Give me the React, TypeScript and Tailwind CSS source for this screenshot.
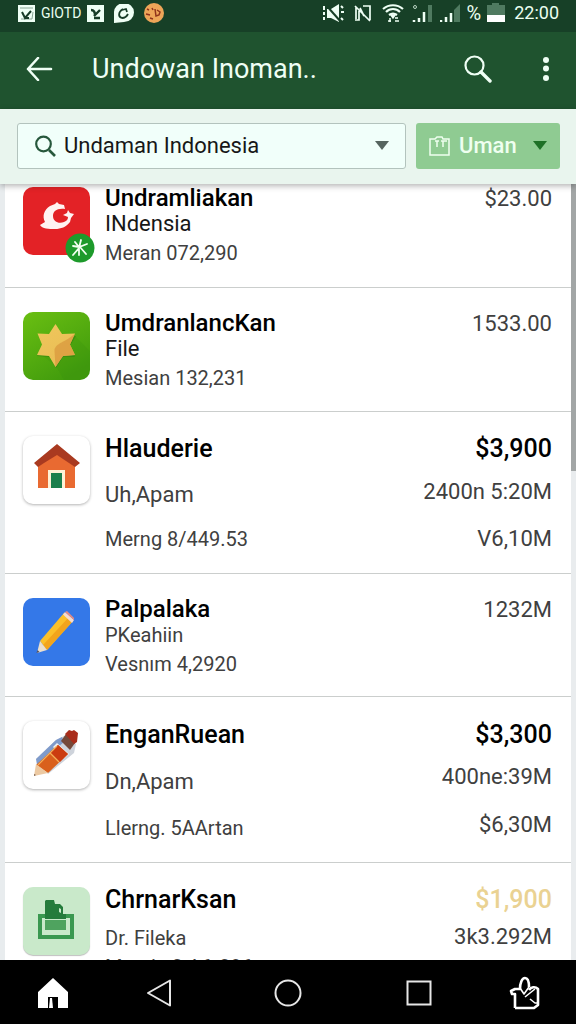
import type { ReactNode } from "react";

type Line = { text: string; className: string };
type Entry = {
  id: string;
  rowClass: string;
  icon: ReactNode;
  left: Line[];
  right: Line[];
};

const TITLE_SMALL = "text-[24px] font-medium text-black";
const TITLE = "text-[25px] font-medium text-black";
const SUB = "text-[22px] text-neutral-900";
const BODY = "text-[22px] text-neutral-700";
const META = "text-[20px] text-neutral-700";

const tile = "h-[68px] w-[67px] shrink-0 rounded-[10px]";

function CrescentIcon() {
  return (
    <div className="relative h-[68px] w-[67px] shrink-0">
      <svg viewBox="0 0 67 68" className="h-full w-full rounded-[10px] bg-[#e32226]" aria-hidden="true">
        <path
          d="M27 19l5-2 2-2 2 2 5 1 1 4c-8-1-12 2-12 7 0 6 6 8 11 6 3-1 4-3 4-5l-5-2 4-2 1-3 2 3 4 1-3 4-1 4c-4 5-9 7-15 7-6 0-13 0-15-4l5-3c-3-6-1-12 5-16z"
          fill="#fff3f2"
        />
      </svg>
      <svg viewBox="0 0 30 30" className="absolute top-[46px] left-[42px] h-[30px] w-[30px]" aria-hidden="true">
        <circle cx="15" cy="15" r="14.500" fill="#1d9a2b" />
        <path
          d="M8 13l6 1 8-3M16 7l-2 8-6 7M10 9l4 5M14 16v6M15 14l6 7"
          stroke="#f2fff2"
          strokeWidth="1.800"
          fill="none"
          strokeLinecap="round"
        />
      </svg>
    </div>
  );
}

function StarIcon() {
  return (
    <svg viewBox="0 0 67 68" className={tile} aria-hidden="true">
      <defs>
        <linearGradient id="star-bg" x1="0" y1="0" x2="0.6" y2="1">
          <stop offset="0" stopColor="#6abf12" />
          <stop offset="1" stopColor="#429c0d" />
        </linearGradient>
        <linearGradient id="star-fill" x1="0" y1="0" x2="0.5" y2="1">
          <stop offset="0" stopColor="#f0c75c" />
          <stop offset="1" stopColor="#e9bd55" />
        </linearGradient>
      </defs>
      <rect width="67" height="68" fill="url(#star-bg)" />
      <path d="M20 44L33 54l8 14h22l4-5V39L52 24z" fill="#2f860c" opacity="0.15" />
      <path d="M33 14l6.500 10.500L53 24l-6 10 5 11-12 0L33 56l-6.500-11L14 44l6-10.500z" fill="#2c7a10" opacity="0.45" />
      <path d="M32.500 12l6.500 10L52 21.500l-5 11 5 10.500-12 1-7.500 11L26 44 14 43l5-10.500-4.500-11L26 22z" fill="url(#star-fill)" />
      <path d="M52 21.500l-5 11 5 10.500-12 1-7.500 11-1-16c0-8 12-9 20.500-17.500z" fill="#d9983e" opacity="0.75" />
    </svg>
  );
}

function HouseIcon() {
  return (
    <svg viewBox="0 0 67 68" className={`${tile} bg-white shadow-[0_1px_3px_rgba(0,0,0,0.3)]`} aria-hidden="true">
      <path d="M15 26L34 11l18 15v26H15z" fill="#e96a31" />
      <path d="M34 8l23 19-5 4-6-4-12-8-13 8-6 4-4-4z" fill="#a93a20" />
      <path d="M25 52V34h17v18z" fill="#fff1d6" />
      <path d="M28 37h11v15H28z" fill="#1c7f4c" />
    </svg>
  );
}

function PencilIcon() {
  return (
    <svg viewBox="0 0 67 68" className={`${tile} bg-[#3478e8]`} aria-hidden="true">
      <path d="M41 15l9 8-26 29-7-9z" fill="#fbc02a" />
      <path d="M46 19l4 4-26 29-4-5z" fill="#f2a41c" />
      <path d="M40 16.500l2-2.500 9 8-2 3z" fill="#f4dcd2" />
      <path d="M42 14l2-1 7 7v2z" fill="#e88a80" />
      <path d="M17 43l7 9-10 3z" fill="#eadfcf" />
      <path d="M14.500 52l2 2-3 1z" fill="#4a4f66" />
    </svg>
  );
}

function MarkerIcon() {
  return (
    <svg viewBox="0 0 67 68" className={`${tile} bg-white shadow-[0_1px_3px_rgba(0,0,0,0.3)]`} aria-hidden="true">
      <path d="M13 38L33 19l10-5 10 9-2 9-26 21z" fill="#ced3db" />
      <path d="M13 38L33 19l6-3 2 5-27 23z" fill="#7f9bcb" />
      <path d="M34 22l12 11-5 4-11-11z" fill="#f3f3f5" />
      <path d="M35 24l10 9-20 19-12-8z" fill="#d9601c" />
      <path d="M35 24l10 9-8 8-10-10z" fill="#cb3c10" />
      <path d="M27 32l9 9M34 25L15 44" stroke="#f3ae58" strokeWidth="1.200" />
      <path d="M38 20l5-7 9 9-5 7z" fill="#75493a" />
      <path d="M42 13l4-4 3 1 2-1 4 3-1 9-3 2z" fill="#a92c1a" />
      <path d="M13 43l12 9-14 3z" fill="#ecc9a2" />
      <path d="M11 53l2 1-2 1z" fill="#7b604f" />
    </svg>
  );
}

function FolderIcon() {
  return (
    <svg viewBox="0 0 67 68" className={`${tile} bg-[#c9e9ca] shadow-[0_1px_1px_rgba(0,0,0,0.25)]`} aria-hidden="true">
      <path d="M15 27h8v4h-4v17h28V31h-7v-4h11v25H15z" fill="#3a9850" />
      <path d="M22 14l1-1h8l1 4h5l3 3v7h3v5H22z" fill="#247b3b" />
      <path d="M36 21l2 1v4l-2-1z" fill="#c9e9ca" />
      <path d="M22 33h21v10H22z" fill="#4fa35f" />
    </svg>
  );
}

const entries: Entry[] = [
  {
    id: "crescent",
    rowClass: "h-[125px]",
    icon: <CrescentIcon />,
    left: [
      { text: "Undramliakan", className: `${TITLE_SMALL} leading-[26px]` },
      { text: "INdensia", className: `${SUB} leading-[26px]` },
      { text: "Meran 072,290", className: `${META} leading-[32px]` },
    ],
    right: [{ text: "$23.00", className: `${BODY} leading-[28px]` }],
  },
  {
    id: "star",
    rowClass: "h-[124px]",
    icon: <StarIcon />,
    left: [
      { text: "UmdranlancKan", className: `${TITLE_SMALL} leading-[26px]` },
      { text: "File", className: `${SUB} leading-[26px]` },
      { text: "Mesian 132,231", className: `${META} leading-[32px]` },
    ],
    right: [{ text: "1533.00", className: `${BODY} leading-[28px]` }],
  },
  {
    id: "house",
    rowClass: "h-[162px]",
    icon: <HouseIcon />,
    left: [
      { text: "Hlauderie", className: `${TITLE} leading-[30px]` },
      { text: "Uh,Apam", className: `${BODY} leading-[62px]` },
      { text: "Merng 8/449.53", className: `${META} leading-[26px]` },
    ],
    right: [
      { text: "$3,900", className: `${TITLE} leading-[30px]` },
      { text: "2400n 5:20M", className: `${BODY} leading-[56px]` },
      { text: "V6,10M", className: `${BODY} leading-[38px]` },
    ],
  },
  {
    id: "pencil",
    rowClass: "h-[123px]",
    icon: <PencilIcon />,
    left: [
      { text: "Palpalaka", className: `${TITLE_SMALL} leading-[26px]` },
      { text: "PKeahiin", className: `${META} leading-[26px]` },
      { text: "Vesnım 4,2920", className: `${META} leading-[32px]` },
    ],
    right: [{ text: "1232M", className: `${BODY} leading-[28px]` }],
  },
  {
    id: "marker",
    rowClass: "h-[166px]",
    icon: <MarkerIcon />,
    left: [
      { text: "EnganRuean", className: `${TITLE} leading-[32px]` },
      { text: "Dn,Apam", className: `${BODY} leading-[62px]` },
      { text: "Llerng. 5AArtan", className: `${META} leading-[30px]` },
    ],
    right: [
      { text: "$3,300", className: `${TITLE} leading-[32px]` },
      { text: "400ne:39M", className: `${BODY} leading-[52px]` },
      { text: "$6,30M", className: `${BODY} leading-[44px]` },
    ],
  },
  {
    id: "folder",
    rowClass: "h-[166px]",
    icon: <FolderIcon />,
    left: [
      { text: "ChrnarKsan", className: `${TITLE} leading-[30px]` },
      { text: "Dr. Fileka", className: `${META} leading-[46px]` },
      { text: "Mernin 3 A6r296", className: `${META} leading-[12px]` },
    ],
    right: [
      { text: "$1,900", className: "text-[25px] font-medium text-[#ead292] leading-[30px]" },
      { text: "3k3.292M", className: `${BODY} leading-[44px]` },
    ],
  },
];

function StatusBar() {
  return (
    <div className="flex h-8 shrink-0 items-center justify-between bg-[#174027] pr-[17px] pb-[6px] pl-[18px] text-[#eafff0]">
      <div className="flex items-center">
        <svg viewBox="0 0 17 17" className="h-[17px] w-[17px]" aria-hidden="true">
          <path d="M0 0h17v17H0z" fill="#effff5" />
          <path d="M2 3h13M3 14h11l1-7" stroke="#8aa796" strokeWidth="1" fill="none" />
          <path d="M4 7l3 6 6-7M7 13h4" stroke="#173c27" strokeWidth="2" fill="none" />
        </svg>
        <span className="ml-[6px] text-[14px] leading-5">GIOTD</span>
        <svg viewBox="0 0 17 17" className="ml-[6px] h-[17px] w-[17px]" aria-hidden="true">
          <path d="M0 0h17v17H0z" fill="#effff5" />
          <path d="M4 5c3 0 4 2 4 5M13 5l-6 6M7 13h6" stroke="#173c27" strokeWidth="2.400" fill="none" />
        </svg>
        <svg viewBox="0 0 20 19" className="ml-[10px] h-[19px] w-5" aria-hidden="true">
          <path d="M0 19V9a10 9.500 0 1 1 10 9z" fill="#effff5" />
          <path d="M9 5c-5 3-5 8-1 9 3 0 5-2 6-4M8 6l4-1 1 3" stroke="#173c27" strokeWidth="1.800" fill="none" />
        </svg>
        <svg viewBox="0 0 20 20" className="ml-[10px] h-5 w-5" aria-hidden="true">
          <circle cx="10" cy="10" r="10" fill="#eda558" />
          <path d="M11 6l1 7 3-1 1-3-3-2M2 11l4 1M3 6l2 1M6 15l3 1M8 5l1 2" stroke="#90331b" strokeWidth="1.500" fill="none" />
        </svg>
      </div>
      <div className="flex items-center">
        <svg viewBox="0 0 21 19" className="h-[19px] w-[21px]" aria-hidden="true">
          <path d="M4 5h4l8-5v18l-8-4H4z" fill="#effff5" />
          <path d="M1 2v4M1 8v3M1 13v3M18 2l2 2M18 8h3M18 14l2 2" stroke="#effff5" strokeWidth="2" />
          <path d="M3 1l15 17" stroke="#174027" strokeWidth="2" />
        </svg>
        <svg viewBox="0 0 19 19" className="ml-[9px] h-[19px] w-[19px]" aria-hidden="true">
          <path d="M3 3v12M2 2l15 15M10 2h7v14M6 7v9H2M7 4l4 8" stroke="#effff5" strokeWidth="1.700" fill="none" />
        </svg>
        <svg viewBox="0 0 22 19" className="ml-[10px] h-[19px] w-[22px]" aria-hidden="true">
          <path d="M1 5c6-5 14-5 20 0M4 8c4-4 10-4 14 0M7 11c3-2 5-2 8 0" stroke="#effff5" strokeWidth="2.200" fill="none" />
          <path d="M9 11l2 3 2-3zM6 17h3M8 14v4M13 14h3M13 17h4" stroke="#effff5" strokeWidth="1.500" fill="#effff5" />
        </svg>
        <svg viewBox="0 0 20 19" className="ml-2 h-[19px] w-5" aria-hidden="true">
          <path d="M2 18v-2M7 18v-4M12 18V8" stroke="#effff5" strokeWidth="2.500" />
          <path d="M18 18V1" stroke="#4f7a60" strokeWidth="4" />
          <circle cx="3" cy="3" r="1.500" stroke="#b9d3c2" fill="none" />
        </svg>
        <svg viewBox="0 0 21 19" className="ml-2 h-[19px] w-[21px]" aria-hidden="true">
          <path d="M1 18v-2M6 18v-5M11 18V9" stroke="#effff5" strokeWidth="2.500" />
          <path d="M14 18V6l6-6v18z" fill="#4f7a60" />
        </svg>
        <span className="ml-[6px] text-[20px] leading-5">%</span>
        <svg viewBox="0 0 18 20" className="ml-[6px] h-5 w-[18px]" aria-hidden="true">
          <path d="M0 2h5V0h7v2h6v10H0z" fill="#4f7a60" />
          <path d="M0 12h18v7H0z" fill="#fff" />
        </svg>
        <span className="ml-[9px] text-[18px] leading-5">22:00</span>
      </div>
    </div>
  );
}

function AppBar() {
  return (
    <header className="flex h-[77px] shrink-0 items-center bg-[#1f532f] pr-[22px] pl-[26px] text-[#effff5]">
      <button type="button" aria-label="Back" className="-mt-1">
        <svg viewBox="0 0 27 24" className="h-6 w-[27px]" fill="none" stroke="currentColor" strokeWidth="2.600" strokeLinecap="round" strokeLinejoin="round">
          <path d="M12 1L2 12l10 11M2 12h23" />
        </svg>
      </button>
      <h1 className="ml-[39px] flex-1 truncate pb-1 text-[27px] leading-9">Undowan Inoman..</h1>
      <button type="button" aria-label="Search" className="-mt-1">
        <svg viewBox="0 0 28 28" className="h-7 w-7" fill="none" stroke="currentColor">
          <circle cx="10.500" cy="10.500" r="9" strokeWidth="2.200" />
          <path d="M17 17l9 9" strokeWidth="3.400" strokeLinecap="round" />
        </svg>
      </button>
      <button type="button" aria-label="More options" className="-mt-1 ml-[46px]">
        <svg viewBox="0 0 16 24" className="h-6 w-4" fill="currentColor">
          <circle cx="8" cy="3" r="3" />
          <circle cx="8" cy="11.500" r="3" />
          <circle cx="8" cy="21" r="3" />
        </svg>
      </button>
    </header>
  );
}

function FilterBar() {
  return (
    <div className="relative z-10 flex h-[75px] shrink-0 items-center gap-[10px] bg-[#e9f5ee] pr-4 pb-[2px] pl-[17px] shadow-[0_2px_6px_rgba(0,0,0,0.3)]">
      <div className="flex h-[46px] min-w-0 flex-1 items-center rounded-[3px] border border-[#b3c3bd] bg-[#f1fffa] pr-4 pl-[17px]">
        <svg viewBox="0 0 21 22" className="h-[22px] w-[21px] shrink-0" fill="none" stroke="#27583c" aria-hidden="true">
          <circle cx="8.500" cy="9" r="7.300" strokeWidth="2.200" />
          <path d="M14 15l6 6" strokeWidth="2.600" />
        </svg>
        <input
          id="query"
          type="text"
          aria-label="Search"
          defaultValue="Undaman Indonesia"
          className="ml-2 min-w-0 flex-1 bg-transparent text-[22px] text-neutral-900 outline-none"
        />
        <button type="button" aria-label="Show suggestions">
          <svg viewBox="0 0 14 9" className="h-[9px] w-[14px]" fill="#56655f">
            <path d="M0 0h14L7 9z" />
          </svg>
        </button>
      </div>
      <button type="button" className="flex h-[46px] w-[144px] shrink-0 items-center rounded-[3px] bg-[#8fcb92] px-[13px] text-[#effff0]">
        <svg viewBox="0 0 21 20" className="h-5 w-[21px] shrink-0" fill="none" stroke="currentColor" strokeWidth="1.500" aria-hidden="true">
          <path d="M1 19V3h5l2-2h5l1 2h6v16zM6 5h4M8 5v6M12 5h6M14 5v6" />
        </svg>
        <span className="ml-[9px] flex-1 text-left text-[22px] font-medium">Uman</span>
        <svg viewBox="0 0 14 9" className="h-[9px] w-[14px] shrink-0" fill="#1f7127" aria-hidden="true">
          <path d="M0 0h14L7 9z" />
        </svg>
      </button>
    </div>
  );
}

function Row({ entry }: { entry: Entry }) {
  return (
    <li className={`flex border-b border-[#cbcecd] pt-[22px] pr-[19px] pl-[18px] ${entry.rowClass}`}>
      <div className="pt-[2px]">{entry.icon}</div>
      <div className="ml-[15px] min-w-0 flex-1 whitespace-nowrap">
        {entry.left.map((line) => (
          <p key={line.text} className={line.className}>
            {line.text}
          </p>
        ))}
      </div>
      <div className="text-right whitespace-nowrap">
        {entry.right.map((line) => (
          <p key={line.text} className={line.className}>
            {line.text}
          </p>
        ))}
      </div>
    </li>
  );
}

function NavBar() {
  return (
    <nav className="grid h-16 shrink-0 grid-cols-[106fr_106fr_152fr_110fr_102fr] place-items-center bg-black pt-[2px] text-[#e6e6e6]">
      <button type="button" aria-label="Home">
        <svg viewBox="0 0 32 32" className="h-8 w-8" fill="#fff">
          <path d="M1 31V15L16 1l15 14v16H21V20H11v11z" />
          <path d="M13 21h2l1 10h-4z" />
        </svg>
      </button>
      <button type="button" aria-label="Back">
        <svg viewBox="0 0 26 28" className="h-7 w-[26px]" fill="none" stroke="currentColor" strokeWidth="2" strokeLinejoin="round">
          <path d="M24 1.500v25L2 14z" />
        </svg>
      </button>
      <button type="button" aria-label="Overview">
        <svg viewBox="0 0 28 28" className="h-7 w-7" fill="none" stroke="currentColor" strokeWidth="2">
          <circle cx="14" cy="14" r="12.500" />
        </svg>
      </button>
      <button type="button" aria-label="Windows">
        <svg viewBox="0 0 26 26" className="h-[26px] w-[26px]" fill="none" stroke="currentColor" strokeWidth="2">
          <rect x="1.500" y="1.500" width="23" height="23" />
        </svg>
      </button>
      <button type="button" aria-label="Share">
        <svg viewBox="0 0 32 34" className="h-[34px] w-8" fill="none" stroke="#fff" strokeWidth="2.600" strokeLinejoin="round">
          <path d="M6 32V18H3l-1-3 4-2h5c0-6 2-11 5-11s4 4 4 9M20 14c2-3 6-4 9-1v16l-4 3H6" />
          <path d="M11 12l4 6 5-7M16 21l10-8M21 23l5 4h4" strokeWidth="1.600" />
        </svg>
      </button>
    </nav>
  );
}

export default function App() {
  return (
    <div className="flex h-screen flex-col overflow-hidden bg-[#e8ecee] font-[Roboto,sans-serif]">
      <StatusBar />
      <AppBar />
      <FilterBar />
      <main className="flex min-h-0 flex-1 overflow-hidden">
        <div className="ml-[5px] min-w-0 flex-1 overflow-hidden bg-white">
          <ul className="-mt-[21px]">
            {entries.map((entry) => (
              <Row key={entry.id} entry={entry} />
            ))}
          </ul>
        </div>
        <div className="w-[5px] shrink-0 bg-[#e9ecee]" aria-hidden="true">
          <div className="h-[37%] bg-[#a2a6a6]" />
        </div>
      </main>
      <NavBar />
    </div>
  );
}
